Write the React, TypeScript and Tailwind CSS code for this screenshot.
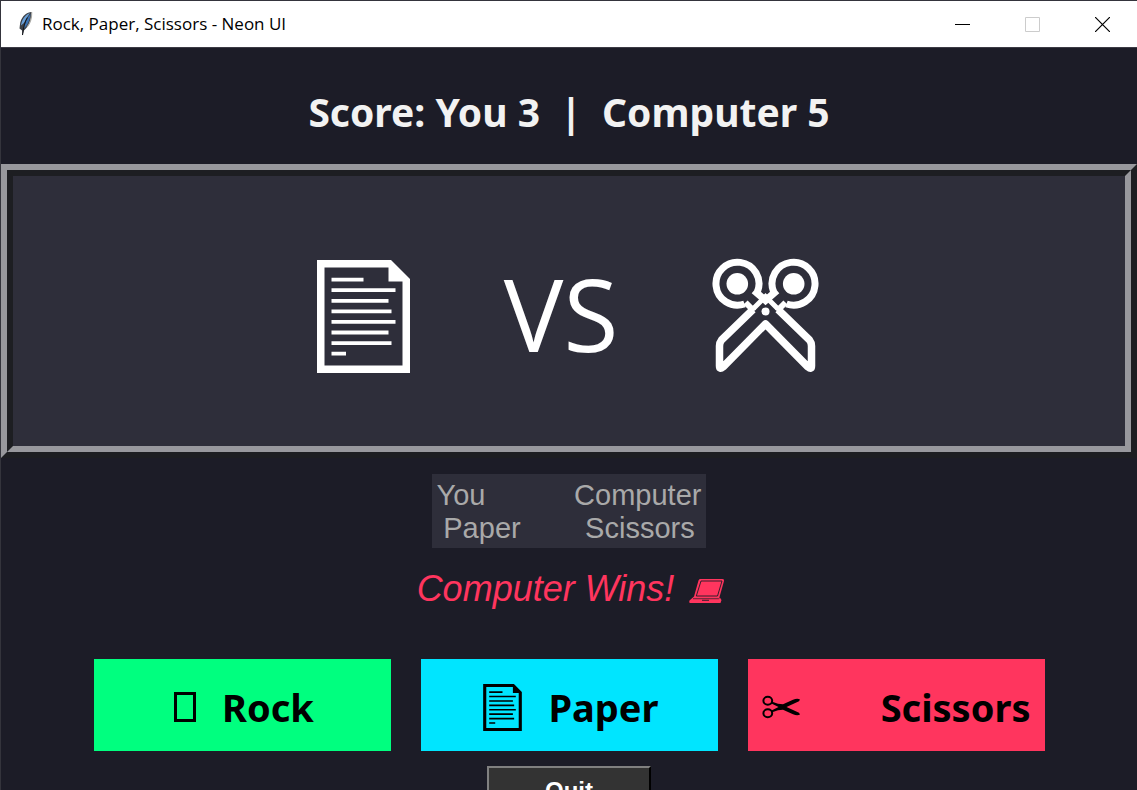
import type { ReactNode } from "react";

function Feather() {
  return (
    <svg width="17" height="26" viewBox="0 0 16 26" aria-hidden="true">
      <path d="M13.5 1 C8 1.5 3 7 2.4 14 L2 17.5 L4.6 19.5 L5 24.5 L6.4 19.5 C11 16 14 9 14.4 1.6 Z" fill="#3d4147" />
      <path d="M12.4 2 C8 3.5 4.5 8 3.4 14.5 L6.4 12 L10.5 5 Z" fill="#6a9fd6" />
      <path d="M13 3 L9.6 7.5 L6.8 14.5 L6.6 17.5 C9.8 14.5 12.4 9 13 3 Z" fill="#3b73b4" />
      <path d="M14.2 1.2 C14.3 7 12.4 12.5 9.6 16" fill="none" stroke="#a8a8a4" strokeWidth="1.2" />
      <path d="M10 6.5 C8 9.5 6 15 5 24" fill="none" stroke="#15171b" strokeWidth="1.1" />
    </svg>
  );
}

function PageIcon({ className }: { className: string }) {
  return (
    <svg className={className} viewBox="0 0 93 113" fill="currentColor" aria-hidden="true">
      <path
        fillRule="evenodd"
        d="M0 0 H74 L93 19 V113 H0 Z M7.5 7.5 V105.5 H85.5 V21.5 H71.5 V7.5 Z"
      />
      <path d="M14.5 17.7h32v3.8h-32z M14.5 28.3h64v3.8h-64z M14.5 39h57v3.8h-57z M14.5 49.5h60v3.8h-60z M14.5 60h64v3.8h-64z M14.5 70.6h57v3.8h-57z M14.5 81.3h60v3.8h-60z M14.5 91.8h14.5v3.8h-14.5z" />
    </svg>
  );
}

function BigScissors() {
  return (
    <svg className="h-[116px] w-[107px]" viewBox="0 -1 107 116" fill="none" stroke="currentColor" aria-hidden="true">
      <path d="M45.500 32.500 A21.500 21.500 0 1 0 32.500 45" strokeWidth="7" />
      <path d="M61.500 32.500 A21.500 21.500 0 1 1 74.500 45" strokeWidth="7" />
      <circle cx="25.300" cy="24.800" r="10.800" fill="currentColor" stroke="none" />
      <circle cx="81.700" cy="24.800" r="10.800" fill="currentColor" stroke="none" />
      <path
        d="M41 50.500 L9.500 81 Q7.500 83.500 7.500 87 V107 Q7.500 111 11 108 L53.500 65 L96 108 Q99.500 111 99.500 107 V87 Q99.500 83.500 97.500 81 L66 50.500"
        strokeWidth="7.500"
        strokeLinejoin="round"
      />
      <path d="M42 31.500 L53.500 41.500 L65 31.500" strokeWidth="7" />
      <path d="M33.500 43.500 L42 52 M73.500 43.500 L65 52" strokeWidth="6" />
      <path d="M41 50 L53.500 37.500 L66 50" strokeWidth="5" />
      <circle cx="53.500" cy="52.500" r="4" fill="currentColor" stroke="none" />
    </svg>
  );
}

function Laptop() {
  return (
    <svg width="37" height="26" viewBox="0 0 37 26" aria-hidden="true">
      <path
        d="M12 1 H34.500 Q36.500 1 36 3 L31.500 19 L33.500 22 L32.500 25 H2 Q0.500 24.500 1.500 22.500 L6 18.500 L10.500 2.500 Q11 1 12 1 Z"
        fill="#ff355e"
      />
      <path d="M13 3 H34 L29.500 18 H8.300 Z" fill="none" stroke="#1c1c27" strokeWidth="0.900" />
      <path d="M5 20.700 H30.500 L32.500 19" fill="none" stroke="#1c1c27" strokeWidth="0.700" />
      <path d="M14 22.300 H21" stroke="#1c1c27" strokeWidth="0.900" />
    </svg>
  );
}

function SmallScissors() {
  return (
    <svg width="38" height="24" viewBox="0 0 38 24" aria-hidden="true">
      <g fill="none" stroke="currentColor" strokeWidth="2">
        <ellipse cx="5.800" cy="5.800" rx="4.400" ry="4" />
        <ellipse cx="5.800" cy="18.200" rx="4.400" ry="4" />
      </g>
      <path
        d="M9.500 6.500 L16 8.800 L21 9.300 L31 4.800 Q35.500 3 38 4.600 L37 6.200 L24.500 12 L37 17.800 L38 19.400 Q35.500 21 31 19.200 L21 14.700 L16 15.200 L9.500 17.500 L9 15.800 L16.500 12 L9 8.200 Z"
        fill="currentColor"
      />
    </svg>
  );
}

function ChoiceButton({ className, children }: { className: string; children: ReactNode }) {
  return (
    <button
      type="button"
      className={`flex h-[92px] w-[297px] items-center pt-1 text-[38px] font-bold text-black ${className}`}
    >
      {children}
    </button>
  );
}

export default function App() {
  return (
    <div className="flex h-screen flex-col overflow-hidden border-l border-t border-[#34343c] bg-[#1c1c27] font-['Noto_Sans','Open_Sans',sans-serif]">
      <header className="flex h-[46px] shrink-0 items-center bg-white pl-4 text-black">
        <Feather />
        <h1 className="ml-2 flex-1 font-['Open_Sans',sans-serif] text-[17px] leading-6">Rock, Paper, Scissors - Neon UI</h1>
        <button type="button" aria-label="Minimize" className="flex h-full w-[70px] items-center justify-center">
          <svg width="15" height="15" viewBox="0 0 15 15"><path d="M0 7.500h15" stroke="#000" /></svg>
        </button>
        <button type="button" aria-label="Maximize" disabled className="flex h-full w-[70px] items-center justify-center">
          <svg width="15" height="15" viewBox="0 0 15 15"><path d="M.5.5h14v14H.5z" fill="none" stroke="#ccc" /></svg>
        </button>
        <button type="button" aria-label="Close" className="flex h-full w-[70px] items-center justify-center">
          <svg width="15" height="15" viewBox="0 0 15 15"><path d="M0 0l15 15M15 0L0 15" stroke="#000" strokeWidth="1.200" /></svg>
        </button>
      </header>

      <main className="flex flex-col items-center border-t border-[#3c3b45]">
        <p className="flex h-[116px] shrink-0 items-center whitespace-pre pt-3 text-[39px] font-bold text-[#f2f2f2]">
          {"Score: You 3  |  Computer 5"}
        </p>

        <section className="w-full shrink-0 border-[6px] border-b-[#1d1e22] border-l-[#98989d] border-r-[#1d1e22] border-t-[#98989d]">
          <div className="flex h-[282px] items-center justify-center border-[6px] border-b-[#98989d] border-l-[#1d1e22] border-r-[#98989d] border-t-[#1d1e22] bg-[#2e2e3a] pr-[2px] pt-[10px] text-white">
            <PageIcon className="h-[113px] w-[93px]" />
            <span className="mx-[94px] pb-[6px] font-['Open_Sans',sans-serif] text-[100px] leading-none">VS</span>
            <BigScissors />
          </div>
        </section>

        <p className="mt-4 shrink-0 whitespace-pre bg-[#2e2e3a] px-[5px] pb-[3px] pt-[5px] text-center font-['Liberation_Sans',Arial,sans-serif] text-[29px] leading-[33px] text-[#a9a9a9]">
          {"You           Computer\nPaper        Scissors"}
        </p>

        <div className="mt-[23px] flex shrink-0 items-center gap-[14px] pl-1 font-['Liberation_Sans',Arial,sans-serif] text-[36px] italic leading-9 text-[#ff355e]">
          <p>Computer Wins!</p>
          <span className="pt-1"><Laptop /></span>
        </div>

        <div className="mt-[52px] flex shrink-0 gap-[30px]">
          <ChoiceButton className="justify-center gap-[26px] bg-[#00ff7f] pl-1">
            <svg width="22" height="30" viewBox="0 0 22 30" aria-hidden="true">
              <path d="M1.500 1.500h19v27h-19z" fill="none" stroke="currentColor" strokeWidth="3" />
            </svg>
            Rock
          </ChoiceButton>
          <ChoiceButton className="justify-center gap-[26px] bg-[#00e5ff] pl-1">
            <PageIcon className="h-[47px] w-[39px]" />
            Paper
          </ChoiceButton>
          <ChoiceButton className="justify-between bg-[#ff355e] px-[14px]">
            <SmallScissors />
            Scissors
          </ChoiceButton>
        </div>

        <button
          type="button"
          className="mt-[15px] h-[50px] w-[164px] shrink-0 border-2 border-b-black border-l-[#808080] border-r-black border-t-[#808080] bg-[#333333] font-['Liberation_Sans',Arial,sans-serif] text-[24px] font-bold leading-6 text-white"
        >
          Quit
        </button>
      </main>
    </div>
  );
}
